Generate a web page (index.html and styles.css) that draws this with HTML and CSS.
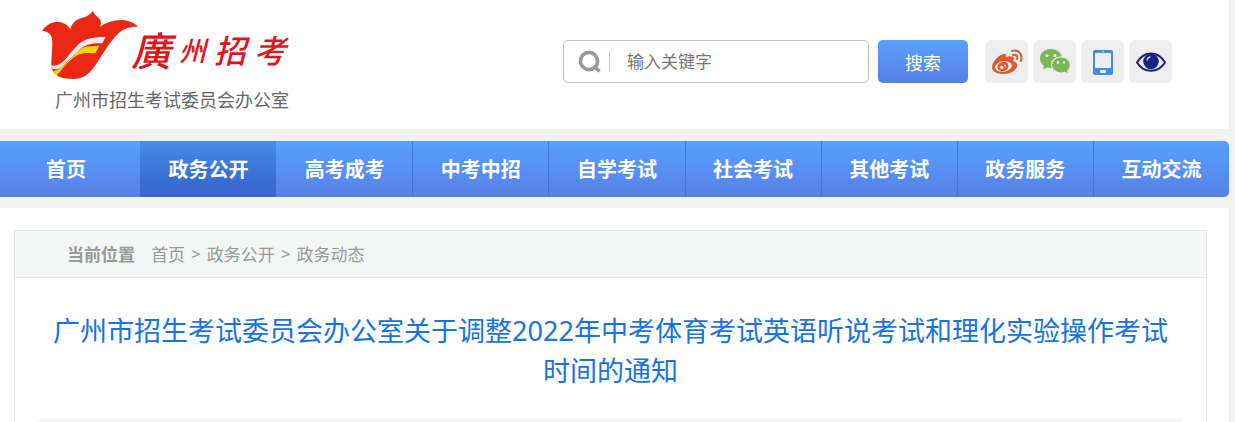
FILE: index.html
```html
<!DOCTYPE html>
<html lang="zh-CN">
<head>
    <meta charset="UTF-8">
    <meta name="viewport" content="width=device-width, initial-scale=1.0">
    <title>广州市招生考试委员会办公室</title>
    <link rel="stylesheet" href="styles.css">
</head>
<body>

    <header class="header">
        <a class="logo" href="#">
            <span class="logo-top">
                <svg class="logo-flower" viewBox="35 18 288 204" aria-hidden="true">
                    <path fill="#e92714" d="M35 77C50 57 68 50 84 51C101 52 113 61 120 73C124 54 138 42 157 38C172 34 182 27 187 18C191 29 202 35 208 42C213 49 213 56 209 65C229 51 253 44 276 45C298 47 314 55 323 65C298 64 278 71 263 86C234 114 216 151 194 182C178 206 158 222 128 222C100 222 72 217 64 190C60 161 70 126 64 96C60 84 49 79 35 77Z"/>
                    <path fill="#f3e9f8" d="M62 180C75 186 90 178 103 165C124 143 137 119 163 106C182 97 204 96 226 96L216 115C189 114 168 117 150 132C130 149 111 172 94 185C81 194 71 194 64 190Z"/>
                    <path fill="#f0d800" d="M67 200C83 196 98 184 113 169C130 152 144 133 162 127C177 122 192 124 207 122L195 145C176 143 156 142 140 151C119 162 99 190 79 211C74 209 70 206 67 200Z"/>
                </svg>
                <span class="logo-name"><span class="big">廣</span><span class="small">州</span><span>招</span><span>考</span></span>
            </span>
            <span class="logo-sub">广州市招生考试委员会办公室</span>
        </a>

        <div class="tools">
            <form class="search" onsubmit="return false">
                <label class="search-box" for="keyword">
                    <svg class="search-icon" viewBox="0 0 24 24" role="img" aria-label="搜索">
                        <circle cx="11" cy="11" r="8.6" fill="none" stroke="#999" stroke-width="3.6"/>
                        <path d="M16 16L21.5 21.5" stroke="#999" stroke-width="3.6"/>
                    </svg>
                    <input type="text" id="keyword" placeholder="输入关键字">
                </label>
                <button type="submit">搜索</button>
            </form>
            <div class="links">
                <a href="#" aria-label="微博">
                    <svg viewBox="0 0 32 28">
                        <path fill="#e2592b" d="M12 6C14 5 16 6 15 9.500C19 7.500 23 8 23 10.500L22 13C25 14 27 16 26 18.500C25 23 19 26 12 26C5 26 1 23 1 19C1 14 8 7 12 6Z"/>
                        <ellipse cx="12.500" cy="18.500" rx="8.500" ry="5.200" transform="rotate(-8 12.500 18.500)" fill="#eee"/>
                        <ellipse cx="12" cy="18.500" rx="5.600" ry="4.600" transform="rotate(-20 12 18.500)" fill="#e2592b"/>
                        <circle cx="10.800" cy="19.500" r="1.800" fill="#eee"/>
                        <circle cx="14" cy="17.500" r="0.900" fill="#eee"/>
                        <path fill="none" stroke="#e2592b" stroke-width="2" stroke-linecap="round" d="M21 3C27 1 32 6 30 13M22 7C25 6 27 8 26 11"/>
                    </svg>
                </a>
                <a href="#" aria-label="微信">
                    <svg viewBox="0 0 32 28">
                        <path fill="#7cb657" d="M12 1C5.500 1 1 5 1 10.500C1 14 2.500 16 5 18L4 21.500L8.500 19.500C10 20 12 20 14 19.800C18 19.500 23 16 23 10.500C23 5 18 1 12 1Z"/>
                        <path fill="#7cb657" stroke="#eee" stroke-width="1.200" d="M22 9C16.500 9 12.500 12.500 12.500 17C12.500 21.500 17 25 22 25C23.500 25 25 24.700 26 24.400L29.500 26L28.700 23C30.500 21.500 31.500 19.500 31.500 17C31.500 12.500 27.500 9 22 9Z"/>
                        <g fill="#eee">
                            <circle cx="8" cy="7.500" r="1.500"/>
                            <circle cx="16" cy="7.500" r="1.500"/>
                            <circle cx="19" cy="14.500" r="1.300"/>
                            <circle cx="25" cy="14.500" r="1.300"/>
                        </g>
                    </svg>
                </a>
                <a href="#" aria-label="手机版">
                    <svg viewBox="0 0 32 28">
                        <rect x="6" y="2" width="20" height="25" rx="2" fill="#438edb"/>
                        <rect x="8" y="5" width="16" height="15" rx="1" fill="#eee"/>
                        <rect x="13" y="22" width="6" height="3" rx="1" fill="#eee"/>
                        <circle cx="16" cy="3.500" r="0.700" fill="#eee"/>
                    </svg>
                </a>
                <a href="#" aria-label="无障碍浏览">
                    <svg viewBox="0 0 32 28">
                        <path fill="none" stroke="#182480" stroke-width="2" stroke-linejoin="round" d="M2 14.500C9 2.500 23 2.500 30 14.500C23 25.500 9 25.500 2 14.500Z"/>
                        <circle cx="16" cy="13.500" r="7.800" fill="#182480"/>
                        <path fill="none" stroke="#eee" stroke-width="1.200" stroke-linecap="round" d="M12 12C12.300 10.300 13.300 9.200 15 8.800"/>
                    </svg>
                </a>
            </div>
        </div>
    </header>

    <nav class="nav">
        <a class="home" href="#">首页</a>
        <a class="active" href="#">政务公开</a>
        <a href="#">高考成考</a>
        <a href="#">中考中招</a>
        <a href="#">自学考试</a>
        <a href="#">社会考试</a>
        <a href="#">其他考试</a>
        <a href="#">政务服务</a>
        <a href="#">互动交流</a>
    </nav>

    <main class="main">
        <div class="article">
            <div class="position">
                <strong>当前位置</strong>
                <a href="#">首页</a>
                <span>&gt;</span>
                <a href="#">政务公开</a>
                <span>&gt;</span>
                <a href="#">政务动态</a>
            </div>
            <h1 class="title">广州市招生考试委员会办公室关于调整2022年中考体育考试英语听说考试和理化实验操作考试时间的通知</h1>
        </div>
    </main>

</body>
</html>
```
FILE: styles.css
```css
* {
    box-sizing: border-box;
}
body {
    margin: 0;
    padding-right: 6px;
    background-color: #f1f1f1;
    font-family: "Noto Sans", "Noto Sans CJK SC", sans-serif;
}
a {
    color: inherit;
    text-decoration: none;
}

/* header */
.header {
    display: flex;
    justify-content: space-between;
    align-items: flex-start;
    padding: 11px 57px 17px 42px;
    background-color: #fff;
}
.logo-top {
    display: flex;
    align-items: flex-start;
    height: 77px;
}
.logo-flower {
    width: 96px;
    height: 68px;
}
.logo-name {
    display: flex;
    align-items: center;
    gap: 8px;
    height: 76px;
    margin-left: -7px;
    color: #e0141c;
    font-family: "Noto Sans CJK TC", sans-serif;
    font-size: 32px;
    font-style: italic;
    font-weight: 500;
}
.logo-name .big {
    font-size: 40px;
}
.logo-name .small {
    font-size: 27px;
}
.logo-sub {
    display: block;
    padding-left: 13px;
    color: #666;
    font-size: 18px;
    line-height: 24px;
}
.tools {
    display: flex;
    gap: 17px;
    padding-top: 29px;
}
.search {
    display: flex;
    gap: 9px;
}
.search-box {
    display: flex;
    align-items: center;
    width: 306px;
    height: 43px;
    padding: 0 14px;
    border: 1px solid #c3c3c3;
    border-radius: 5px;
}
.search-icon {
    flex: none;
    width: 24px;
    height: 24px;
}
.search-box input {
    flex: 1;
    min-width: 0;
    height: 21px;
    margin-left: 7px;
    padding: 0 0 0 17px;
    border: none;
    border-left: 1px solid #ccc;
    outline: none;
    background: none;
    color: #333;
    font-family: inherit;
    font-size: 17px;
}
.search-box input::placeholder {
    color: #757575;
}
.search button {
    width: 90px;
    height: 43px;
    padding: 0;
    border: none;
    border-radius: 5px;
    background: linear-gradient(#59a0fb, #5780e4);
    color: #fff;
    font-family: inherit;
    font-size: 18px;
    cursor: pointer;
}
.links {
    display: flex;
    gap: 5px;
}
.links a {
    display: flex;
    align-items: center;
    justify-content: center;
    width: 43px;
    height: 43px;
    border-radius: 6px;
    background-color: #eee;
}
.links svg {
    width: 32px;
    height: 28px;
}

/* menu */
.nav {
    display: flex;
    height: 56px;
    margin: 12px 0 11px;
    border-radius: 0 5px 5px 0;
    background: linear-gradient(#57a0fb, #5892f5 45%, #5780e4);
    color: #fff;
    font-size: 20px;
    font-weight: bold;
    line-height: 58px;
    text-align: center;
}
.nav a {
    flex: 1;
    border-left: 1px solid #3f77d6;
}
.nav .home {
    flex: 0 0 140px;
    padding-right: 8px;
    border-left: none;
}
.nav .active,
.nav .active + a {
    border-left-color: transparent;
}
.nav .active {
    background: linear-gradient(#478ce8, #3a6dd2 70%, #3a69ce);
}

/* article */
.main {
    padding: 22px 22px 0 14px;
    background-color: #fff;
}
.article {
    border: 1px solid #e4e6e6;
    border-bottom: none;
}
.position {
    display: flex;
    align-items: center;
    gap: 6px;
    height: 47px;
    padding: 0 52px 2px;
    border-bottom: 1px solid #e4e6e6;
    background-color: #f4f6f5;
    color: #999;
    font-size: 17px;
}
.position strong {
    margin-right: 10px;
}
.title {
    margin: 0 24px;
    padding: 33px 12px 28px;
    border-bottom: 3px solid #f3f4f5;
    color: #1673e0;
    font-size: 27px;
    font-weight: normal;
    line-height: 40px;
    text-align: center;
}
```
